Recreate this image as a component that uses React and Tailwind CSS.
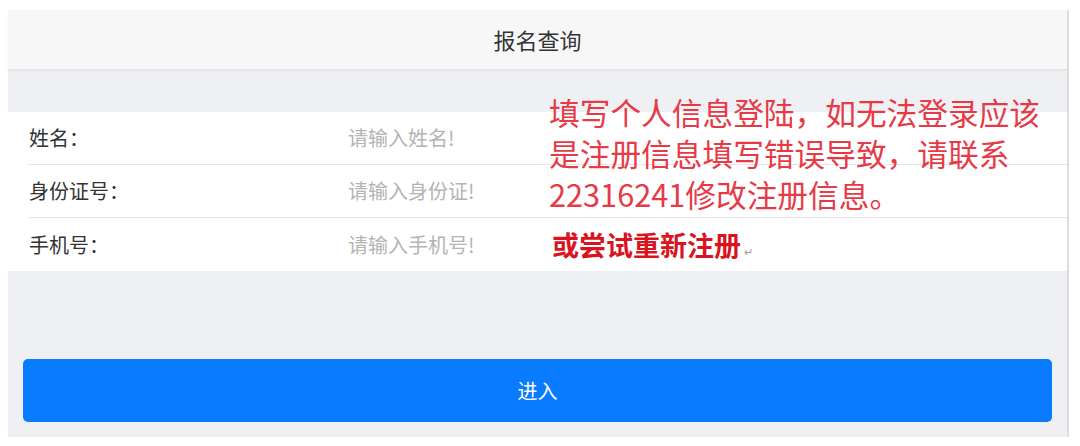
import React from 'react';

const fields = [
  { label: '姓名：', placeholder: '请输入姓名!' },
  { label: '身份证号：', placeholder: '请输入身份证!' },
  { label: '手机号：', placeholder: '请输入手机号!' },
];

export default function App() {
  return (
    <div className="w-[1080px] h-[446px] bg-white pl-[8px] pt-[10px] font-['Noto_Sans_CJK_SC',sans-serif]">
      <div className="relative w-[1061px] h-[427px] bg-[#eff0f4] border-r-2 border-[#dddddd] flex flex-col">
        {/* header */}
        <div className="h-[60px] bg-[#f7f7f7] border-b border-[#e4e4e4] shadow-[0_1px_2px_rgba(0,0,0,0.05)] flex items-center justify-center text-[22px] text-[#333]">
          报名查询
        </div>

        <div className="h-[42px]" />

        {/* form rows */}
        <div className="bg-white">
          {fields.map((f, i) => (
            <div
              key={f.label}
              className={`ml-[20px] h-[53px] flex items-center ${i < fields.length - 1 ? 'border-b border-[#e6e6e6]' : ''}`}
            >
              <label className="w-[320px] pl-[1px] text-[20px] text-[#333]">{f.label}</label>
              <input
                type="text"
                placeholder={f.placeholder}
                className="flex-1 bg-transparent outline-none text-[20px] text-[#333] placeholder:text-[#b4b4b4]"
              />
            </div>
          ))}
        </div>

        <div className="flex-1" />

        <div className="px-[15px] pb-[15px]">
          <button className="w-full h-[63px] rounded-[5px] bg-[#087bff] text-white text-[20px]">
            进入
          </button>
        </div>

        {/* red annotation pasted over the form */}
        <div className="absolute left-[541px] top-[81px] text-[30.7px] leading-[41px] text-[#e73a46] whitespace-nowrap pointer-events-none">
          <div>填写个人信息登陆，如无法登录应该</div>
          <div>是注册信息填写错误导致，请联系</div>
          <div>22316241修改注册信息。</div>
        </div>
        <div className="absolute left-[544px] top-[221px] flex items-end whitespace-nowrap pointer-events-none">
          <span className="text-[27px] leading-[27px] font-bold text-[#d9141e]">或尝试重新注册</span>
          <span className="ml-[3px] text-[11px] leading-[14px] text-[#999]">↵</span>
        </div>
      </div>
    </div>
  );
}
